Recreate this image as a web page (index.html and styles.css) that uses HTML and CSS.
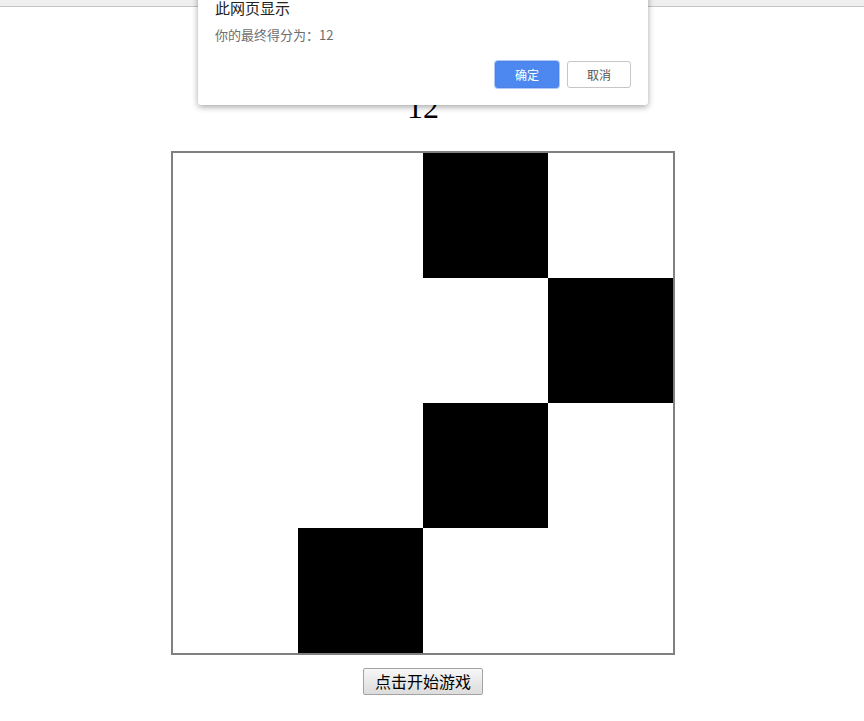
FILE: index.html
```html
<!DOCTYPE html>
<html lang="zh">
<head>
<meta charset="utf-8">
<title>别踩白块</title>
<link rel="stylesheet" href="styles.css">
</head>
<body>
<div class="chrome"></div>
<main class="page">
  <div class="score">12</div>
  <div class="board">
    <div class="row"><div class="cell"></div><div class="cell"></div><div class="cell black"></div><div class="cell"></div></div>
    <div class="row"><div class="cell"></div><div class="cell"></div><div class="cell"></div><div class="cell black"></div></div>
    <div class="row"><div class="cell"></div><div class="cell"></div><div class="cell black"></div><div class="cell"></div></div>
    <div class="row"><div class="cell"></div><div class="cell black"></div><div class="cell"></div><div class="cell"></div></div>
  </div>
  <button class="start">点击开始游戏</button>
</main>
<div class="dialog">
  <div class="dlg-title">此网页显示</div>
  <div class="dlg-msg">你的最终得分为：12</div>
  <div class="dlg-actions">
    <button class="dlg-btn ok">确定</button>
    <button class="dlg-btn cancel">取消</button>
  </div>
</div>
</body>
</html>
```
FILE: styles.css
```css
html, body {
  margin: 0;
  padding: 0;
  background: #fff;
}
.chrome {
  height: 6px;
  background: #efefef;
  border-bottom: 1px solid #c4c4c4;
}
.page {
  width: 846px;
  display: flex;
  flex-direction: column;
  align-items: center;
}
.score {
  margin-top: 82px;
  font-family: "Liberation Serif", "Times New Roman", serif;
  font-size: 32px;
  line-height: 36px;
  height: 36px;
  color: #000;
  margin-bottom: 26px;
}
.board {
  border: 2px solid #808080;
  width: 500px;
  height: 500px;
  display: flex;
  flex-direction: column;
}
.row {
  display: flex;
  height: 125px;
}
.cell {
  width: 125px;
  height: 125px;
  background: #fff;
}
.cell.black {
  background: #000;
}
.start {
  margin-top: 13px;
  width: 120px;
  height: 27px;
  padding: 0;
  font-family: "Noto Sans CJK SC", "Microsoft YaHei", sans-serif;
  font-size: 16px;
  line-height: 25px;
  color: #000;
  background: linear-gradient(#f7f7f7, #dcdcdc);
  border: 1px solid #a3a3a3;
  border-radius: 2px;
}
.dialog {
  position: absolute;
  top: -17px;
  left: 198px;
  width: 450px;
  box-sizing: border-box;
  padding: 15px 17px 17px 17px;
  background: #fff;
  border-radius: 0 0 3px 3px;
  box-shadow: 0 2px 6px rgba(0, 0, 0, 0.35);
  font-family: "Noto Sans CJK SC", "Microsoft YaHei", sans-serif;
}
.dlg-title {
  font-size: 15px;
  line-height: 20px;
  color: #222;
}
.dlg-msg {
  margin-top: 8px;
  font-size: 13px;
  line-height: 18px;
  color: #6e6e6e;
}
.dlg-actions {
  margin-top: 17px;
  display: flex;
  justify-content: flex-end;
  gap: 8px;
}
.dlg-btn {
  width: 64px;
  height: 27px;
  padding: 0;
  font-family: "Noto Sans CJK SC", "Microsoft YaHei", sans-serif;
  font-size: 12px;
  border-radius: 3px;
}
.dlg-btn.ok {
  background: #4d87f0;
  color: #fff;
  border: 1px solid #4a82e8;
  box-shadow: 0 0 0 1px rgba(77, 135, 240, 0.45);
}
.dlg-btn.cancel {
  background: #fff;
  color: #555;
  border: 1px solid #c6c6c6;
}
```
